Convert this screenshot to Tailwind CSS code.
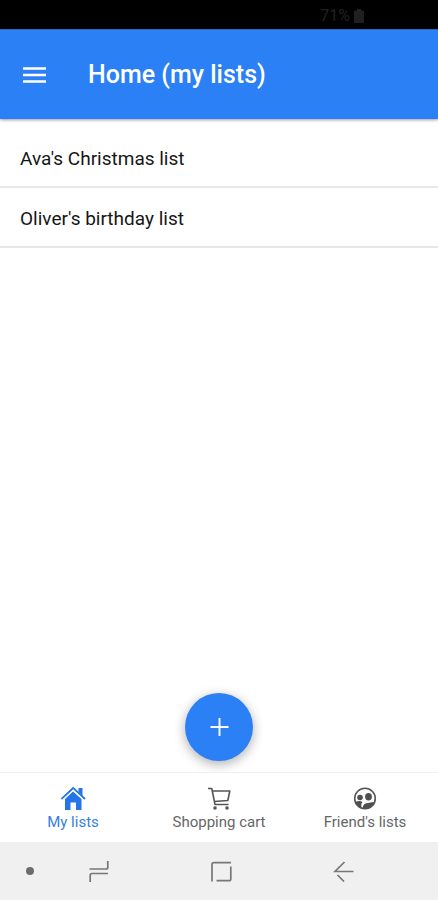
<!DOCTYPE html>
<html lang="en">
<head>
<meta charset="utf-8">
<meta name="viewport" content="width=device-width, initial-scale=1">
<title>Home (my lists)</title>
<script src="https://cdn.jsdelivr.net/npm/@tailwindcss/browser@4"></script>
</head>
<body class="flex h-dvh flex-col overflow-hidden bg-white font-['Roboto',sans-serif] text-[#161616]">
  <div class="flex h-[29px] shrink-0 items-center justify-end gap-1 bg-black pr-[74px] pt-0.5 text-base text-[#202020]">
    <span>71%</span>
    <svg class="h-3.5 w-2.5" viewBox="0 0 10 14" fill="currentColor" aria-hidden="true"><path d="M3 0h4v1.500h2a1 1 0 0 1 1 1V13a1 1 0 0 1-1 1H1a1 1 0 0 1-1-1V2.500a1 1 0 0 1 1-1h2z"/></svg>
  </div>

  <header class="z-10 flex h-[90px] shrink-0 items-center gap-10 border-t border-[#2468c4] bg-[#2b80f6] px-5 text-white shadow-[0_1px_3px_rgba(0,0,0,0.4)]">
    <button type="button" aria-label="Menu" class="flex size-7 items-center justify-center">
      <svg class="h-4 w-6" viewBox="0 0 24 16" fill="none" stroke="currentColor" stroke-width="2.500" aria-hidden="true"><path d="M1 1.500h23M1 8h23M1 14.500h23"/></svg>
    </button>
    <h1 class="text-[25px] font-medium">Home (my lists)</h1>
  </header>

  <main class="min-h-0 flex-1 pt-[9px]">
    <ul class="text-[19px]">
      <li><a href="#ava" class="flex h-[60px] items-center border-b-2 border-[#e7e7e7] px-5 pt-1">Ava's Christmas list</a></li>
      <li><a href="#oliver" class="flex h-[60px] items-center border-b-2 border-[#e7e7e7] px-5 pt-1">Oliver's birthday list</a></li>
    </ul>
  </main>

  <div class="flex shrink-0 justify-center pb-[11px]">
    <button type="button" aria-label="Add list" class="flex size-[68px] items-center justify-center rounded-full bg-[#2b80f6] text-white shadow-[0_3px_12px_rgba(0,0,0,0.32)]">
      <svg class="size-5" viewBox="0 0 20 20" fill="none" stroke="currentColor" stroke-width="1.900" aria-hidden="true"><path d="M10.500 1v18M1.500 10h18"/></svg>
    </button>
  </div>

  <nav aria-label="Main" class="grid h-[70px] shrink-0 grid-cols-3 border-t border-[#f0f0f0] bg-white text-[15px] leading-5 text-[#666]">
    <a href="#lists" aria-current="page" class="flex flex-col items-center gap-px pt-3 text-[#347fe2]">
      <svg class="size-[26px]" viewBox="0 0 26 26" aria-hidden="true">
        <path fill="#2475e8" d="M18.500 3H22.500v8l-4-4zM13 6.500l8.500 7.500V25h-5.500v-7.500h-5.500V25H5V14z"/>
        <path fill="none" stroke="#2475e8" stroke-width="1.800" d="M1.500 14 13.200 3 25 14"/>
        <path fill="none" stroke="#fff" stroke-width=".8" d="M2.700 14.800 13.200 5 23.800 14.800"/>
      </svg>
      <span>My lists</span>
    </a>
    <a href="#cart" class="flex flex-col items-center gap-px pt-3">
      <svg class="size-[26px]" viewBox="0 0 26 26" fill="none" stroke="#555" stroke-width="1.600" stroke-linejoin="round" aria-hidden="true">
        <path d="M2 3.500h3.800L9 19.500h13.500M6.300 6H23.800l-2 9.500L8.300 16.500"/>
        <g fill="#555" stroke="none"><circle cx="9" cy="23" r="1.800"/><circle cx="21" cy="23" r="1.800"/></g>
      </svg>
      <span>Shopping cart</span>
    </a>
    <a href="#friends" class="flex flex-col items-center gap-px pt-3">
      <svg class="size-[26px]" viewBox="0 0 26 26" aria-hidden="true">
        <circle cx="13" cy="13.500" r="10.300" fill="#fff" stroke="#555" stroke-width="1.600"/>
        <g fill="#505050">
          <circle cx="8" cy="12.500" r="2.800"/>
          <ellipse cx="16.500" cy="11.700" rx="3.400" ry="3.700"/>
          <path d="M3.200 17.200q4-2.200 7.300-.2-2 2-.8 6.100-4.500-1.200-6.500-5.900z"/>
          <path d="M11 23.400c-.3-3 1-5.200 4.800-5.400 3.200-.2 4.300-1.300 6.900-.4-1.500 4.500-6.600 7.600-11.700 5.800z"/>
        </g>
      </svg>
      <span>Friend's lists</span>
    </a>
  </nav>

  <div role="toolbar" aria-label="System navigation" class="flex h-[58px] shrink-0 items-center bg-[#f0f0f0] pl-[22px] pr-[34px] text-[#777]">
    <button type="button" aria-label="Toggle navigation bar" class="flex size-4 items-center justify-center"><span class="size-2 rounded-full bg-[#6c6c6c]"></span></button>
    <button type="button" aria-label="Recent apps" class="flex h-full flex-1 items-center justify-center">
      <svg class="size-[22px]" viewBox="0 0 22 22" fill="none" stroke="currentColor" stroke-width="1.700" aria-hidden="true"><path d="M1.500 9H18q1.800 0 1.800-1.800V1M20 13.500H4q-1.800 0-1.800 1.800V22"/></svg>
    </button>
    <button type="button" aria-label="Home" class="flex h-full flex-1 items-center justify-center">
      <svg class="size-[22px]" viewBox="0 0 22 22" fill="none" stroke="currentColor" stroke-width="1.700" aria-hidden="true"><path d="M2 21.500V4.500Q2 2.700 3.800 2.700H21M20.800 6.500v12.400q0 1.800-1.800 1.800H6.500"/></svg>
    </button>
    <button type="button" aria-label="Back" class="flex h-full flex-1 items-center justify-center">
      <svg class="size-[22px]" viewBox="0 0 22 22" fill="none" stroke="currentColor" stroke-width="1.700" aria-hidden="true"><path d="M21.500 11.500H3L12.500 2M5.500 15 12 21.500"/></svg>
    </button>
  </div>
</body>
</html>
